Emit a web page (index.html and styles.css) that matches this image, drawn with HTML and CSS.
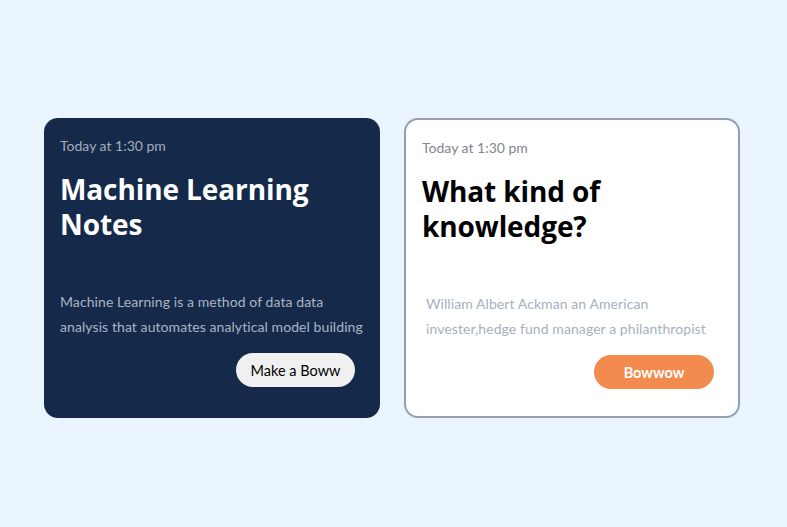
FILE: index.html
```html
<!DOCTYPE html>
<html>
<head>
<meta charset="utf-8">
<link rel="stylesheet" href="styles.css">
</head>
<body>
<main class="board">
  <article class="card card-dark">
    <p class="time">Today at 1:30 pm</p>
    <h2 class="title">Machine Learning Notes</h2>
    <p class="desc">Machine Learning is a method of data data analysis that automates analytical model building</p>
    <div class="actions"><button class="btn btn-light">Make a Boww</button></div>
  </article>
  <article class="card card-light">
    <p class="time">Today at 1:30 pm</p>
    <h2 class="title">What kind of knowledge?</h2>
    <p class="desc desc-indent">William Albert Ackman an American invester,hedge fund manager a philanthropist</p>
    <div class="actions"><button class="btn btn-orange">Bowwow</button></div>
  </article>
</main>
</body>
</html>
```
FILE: styles.css
```css
* { box-sizing: border-box; }
html, body { margin: 0; height: 100%; }
body {
  background: #ebf5ff;
  font-family: "Lato", "Noto Sans", sans-serif;
}
.board {
  display: grid;
  grid-template-columns: 336px 336px;
  gap: 24px;
  padding: 118px 0 0 44px;
}
.card {
  height: 300px;
  border-radius: 14px;
  padding: 18px 16px 0 16px;
  display: flex;
  flex-direction: column;
}
.card-dark { background: #152a4a; color: #fff; }
.card-light { background: #fff; border: 2px solid #959fb0; padding-top: 18px; }
.time {
  margin: 0;
  font-size: 14px;
  line-height: 20px;
}
.card-dark .time { color: #a5adbb; }
.card-light .time { color: #80868f; }
.title {
  margin: 16px 0 0;
  font-family: "Open Sans", sans-serif;
  font-size: 28px;
  line-height: 35px;
  font-weight: 700;
  letter-spacing: -0.1px;
  height: 117px;
}
.card-light .title { color: #000; }
.desc {
  margin: 0;
  font-size: 14px;
  line-height: 25px;
  letter-spacing: 0.08px;
}
.card-dark .desc { color: #aab4c6; }
.card-light .desc { color: #a7b0bf; }
.desc-indent { padding-left: 4px; }
.actions {
  display: flex;
  justify-content: flex-end;
  margin-top: 14px;
  padding-right: 9px;
}
.btn {
  border: none;
  border-radius: 17px;
  height: 34px;
  font-family: inherit;
  font-size: 14.5px;
  padding: 0 12px;
}
.btn-light { background: #f0f0f0; color: #000; width: 119px; }
.btn-orange { background: #f28b4d; color: #fff; font-weight: 700; width: 120px; }
.card-light .actions { padding-right: 8px; }
```
